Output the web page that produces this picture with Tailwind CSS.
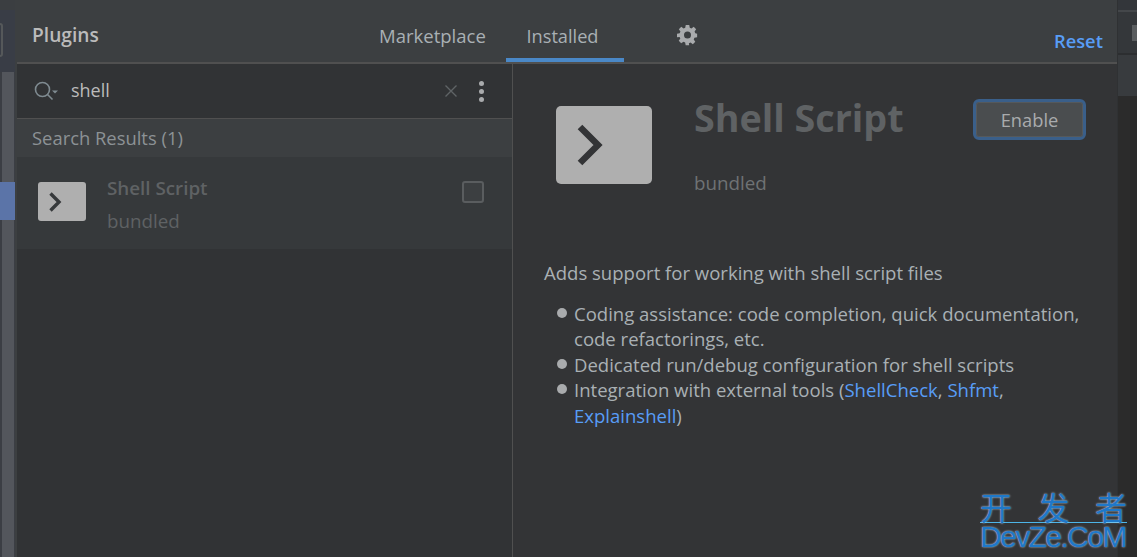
<!DOCTYPE html>
<html>
<head>
<meta charset="utf-8">
<script src="https://cdn.jsdelivr.net/npm/@tailwindcss/browser@4"></script>
</head>
<body class="w-[1137px] h-[557px] overflow-hidden bg-[#313335] font-['Open_Sans','Noto_Sans',sans-serif] text-[18.55px] text-[#a9adb0]">
<div class="flex h-[557px] relative">
  <!-- left strip -->
  <div class="w-[17px] shrink-0 bg-[#3c3f41] flex flex-col">
    <div class="h-[10px] w-[15px] bg-[#3b3e41]"></div>
    <div class="h-[62px] w-[15px] bg-[#393d46] relative"><div class="absolute left-[-6px] top-[13px] w-[9px] h-[34px] border-2 border-[#55585a] rounded-[3px]"></div></div>
    <div class="w-[15px] flex-1 bg-[#3b3e44] flex flex-col pl-[2px]">
      <div class="w-[12px] h-[110px] bg-[#53565c]"></div>
      <div class="h-[38px] bg-[#5b74a8] ml-[-2px] w-[15px]"></div>
      <div class="w-[12px] flex-1 bg-[#53565c]"></div>
    </div>
  </div>
  <!-- main -->
  <div class="w-[1100px] shrink-0 flex flex-col">
    <div class="h-[62px] bg-[#3c3f41] flex relative border-b-[2px] border-[#505050] box-content">
      <div class="w-[489px] pl-[15px] pt-[22px] font-semibold text-[19.200px] text-[#bbbbbb] leading-[26px]">Plugins</div>
      <div class="absolute left-[362px] top-[23px] leading-[26px] text-[#a9b0b4]">Marketplace</div>
      <div class="absolute left-[489px] top-0 w-[118px] h-[62px] border-b-[4px] border-[#4a88c7] flex justify-center pt-[23px] pr-[5px] leading-[26px] text-[#a9b0b4] text-[18.200px]">Installed</div>
      <svg class="absolute left-[660px] top-[25px]" width="21" height="21" viewBox="0 0 24 24" fill="#a9abad"><path fill-rule="evenodd" d="M10 1h4l.6 3.100 1.900.8 2.600-1.800 2.800 2.800-1.800 2.600.8 1.900L23 11v4l-3.100.6-.8 1.900 1.800 2.600-2.800 2.800-2.600-1.800-1.900.8L13.900 24h-4l-.6-3.100-1.900-.8-2.600 1.800-2.800-2.800 1.800-2.600-.8-1.900L0 15v-4l3.100-.6.8-1.900-1.800-2.600 2.800-2.800 2.600 1.800 1.900-.8zM12 8.500a4 4 0 1 0 0 8 4 4 0 0 0 0-8z" transform="translate(0 -1)"/></svg>
      <div class="absolute left-[1037px] top-[28px] leading-[26px] font-semibold text-[18.300px] text-[#589df6]">Reset</div>
    </div>
    <div class="flex flex-1 min-h-0">
      <!-- left pane -->
      <div class="w-[496px] shrink-0 border-r border-[#505050] flex flex-col">
        <div class="h-[54px] bg-[#313335] border-b border-[#505050] box-content flex items-center relative">
          <svg class="absolute left-[17px] top-[17px]" width="26" height="20" viewBox="0 0 26 20" fill="none" stroke="#7f8b91" stroke-width="1.600"><circle cx="8.500" cy="8.500" r="7"/><path d="M13.500 13.500l5 5"/><path d="M18 9.500h6l-3 3z" fill="#7f8b91" stroke="none"/></svg>
          <div class="pl-[54px] text-[18px] text-[#bbbbbb] leading-[26px] mt-[-2px]">shell</div>
          <svg class="absolute left-[427px] top-[20px]" width="14" height="14" viewBox="0 0 14 14" stroke="#5f6466" stroke-width="1.400"><path d="M1.500 1.500l11 11M12.500 1.500l-11 11"/></svg>
          <div class="absolute left-[462px] top-[17px] flex flex-col gap-[3px]">
            <div class="w-[5px] h-[5px] rounded-full bg-[#a9abad]"></div>
            <div class="w-[5px] h-[5px] rounded-full bg-[#a9abad]"></div>
            <div class="w-[5px] h-[5px] rounded-full bg-[#a9abad]"></div>
          </div>
        </div>
        <div class="h-[38px] bg-[#3c3f41] pl-[15px] flex items-center text-[18.400px] text-[#8c9295]">Search Results (1)</div>
        <div class="h-[92px] bg-[#36393b] relative">
          <div class="absolute left-[21px] top-[25px] w-[48px] h-[39px] rounded-[3px] bg-[#afafaf] flex items-center">
            <svg class="ml-[10px]" width="16" height="24" viewBox="0 0 16 24" fill="none" stroke="#36393b" stroke-width="3.400"><path d="M2.500 3.500L11 12l-8.500 8.500"/></svg>
          </div>
          <div class="absolute left-[90px] top-[18px] leading-[26px] font-semibold text-[18.800px] text-[#5f6264]">Shell Script</div>
          <div class="absolute left-[90px] top-[51px] leading-[26px] text-[18.800px] text-[#5f6264]">bundled</div>
          <div class="absolute left-[445px] top-[24px] w-[22px] h-[22px] rounded-[3px] bg-[#3c3f41] border-2 border-[#5a5d5f]"></div>
        </div>
        <div class="flex-1 bg-[#313335]"></div>
      </div>
      <!-- detail pane -->
      <div class="flex-1 bg-[#333436] relative">
        <div class="absolute left-[43px] top-[42px] w-[96px] h-[78px] rounded-[5px] bg-[#afafaf] flex items-center">
          <svg class="ml-[20px]" width="30" height="46" viewBox="0 0 30 46" fill="none" stroke="#333436" stroke-width="6.500"><path d="M4 5L22 23 4 41"/></svg>
        </div>
        <div class="absolute left-[181px] top-[29px] text-[37.700px] leading-[50px] font-bold text-[#5f6264]">Shell Script</div>
        <div class="absolute left-[181px] top-[106px] leading-[26px] text-[18.800px] text-[#6f7274]">bundled</div>
        <div class="absolute left-[460px] top-[35px] w-[113px] h-[41px] rounded-[6px] border-[3px] border-[#3a5f8a] bg-[#4a4d4f] shadow-[inset_0_0_0_1px_#55595c] flex items-center justify-center text-[18.300px] text-[#a9abad]">Enable</div>
        <div class="absolute left-[31px] top-[196px] w-[545px] leading-[26px] text-[#a9b0b4]">
          <p>Adds support for working with shell script files</p>
          <ul class="mt-[14.500px] pl-[30px] leading-[25.500px]">
            <li class="relative"><span class="absolute left-[-17px] top-[7px] w-[10px] h-[10px] rounded-full bg-[#a9abad]"></span>Coding assistance: code completion, quick documentation, code refactorings, etc.</li>
            <li class="relative"><span class="absolute left-[-17px] top-[7px] w-[10px] h-[10px] rounded-full bg-[#a9abad]"></span>Dedicated run/debug configuration for shell scripts</li>
            <li class="relative"><span class="absolute left-[-17px] top-[7px] w-[10px] h-[10px] rounded-full bg-[#a9abad]"></span>Integration with external tools (<span class="text-[#589df6]">ShellCheck</span>, <span class="text-[#589df6]">Shfmt</span>, <span class="text-[#589df6]">Explainshell</span>)</li>
          </ul>
        </div>
      </div>
    </div>
  </div>
  <!-- right strip -->
  <div class="w-[20px] shrink-0 bg-[#2b2b2b] flex flex-col border-l border-[#2f3133]">
    <div class="h-[10px] bg-[#33363a] border-b-2 border-[#44474a] box-content"></div>
    <div class="h-[41px] bg-[#34373a] border-b-2 border-[#2c2e30] box-content relative"><div class="absolute left-[14px] top-[13px] w-[6px] h-[16px] bg-[#5a5d5f]"></div></div>
    <div class="h-[41px] bg-[#383b3e]"></div>
  </div>
  <!-- watermark -->
  <div class="absolute left-[980px] top-[491px] w-[147px] text-[#1f78c8] font-['Liberation_Sans','Noto_Sans_CJK_SC',sans-serif] [text-shadow:0_0_2px_#cfe3f5]">
    <div class="flex justify-between text-[32px] h-[31px] border-b border-[#4db5e8] box-content leading-[31px] font-['Noto_Sans_CJK_SC',sans-serif]"><span>开</span><span>发</span><span>者</span></div>
    <div class="text-[30px] tracking-[-1.600px] leading-[25px] mt-[1px] whitespace-nowrap">DevZe.CoM</div>
  </div>
</div>
</body>
</html>
